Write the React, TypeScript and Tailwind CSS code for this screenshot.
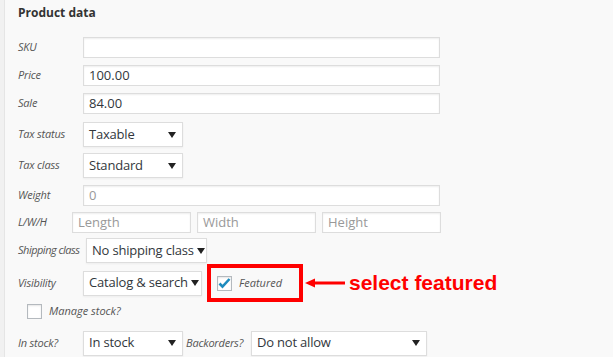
import React from "react";

const font = { fontFamily: '"Open Sans", "Noto Sans", sans-serif' };

function Label({ children, w = "w-[65px]" }: { children: React.ReactNode; w?: string }) {
  return (
    <label className={`${w} shrink-0 whitespace-nowrap text-[11px] italic text-[#555] tracking-[-0.2px]`}>
      {children}
    </label>
  );
}

function TextInput({ value, placeholder, w = "w-[357px]" }: { value?: string; placeholder?: string; w?: string }) {
  return (
    <div
      className={`${w} h-[21px] bg-white border border-[#ddd] shadow-[inset_0_1px_2px_rgba(0,0,0,0.07)] px-[5px] flex items-center text-[13px] ${
        value ? "text-[#32373c]" : "text-[#999]"
      }`}
    >
      {value ?? placeholder}
    </div>
  );
}

function Select({ value, w }: { value: string; w: string }) {
  return (
    <div
      className={`${w} h-[25px] shrink-0 bg-white border border-[#ddd] shadow-[0_1px_2px_rgba(0,0,0,0.05)] pl-[5px] pr-[6px] flex items-center justify-between text-[13px] tracking-[-0.2px] text-[#32373c]`}
    >
      <span className="whitespace-nowrap">{value}</span>
      <svg width="8" height="6" viewBox="0 0 8 6" className="shrink-0 ml-[3px]">
        <path d="M0 0h8L4 6z" fill="#222" />
      </svg>
    </div>
  );
}

function Checkbox({ checked }: { checked?: boolean }) {
  return (
    <div className="w-[15px] h-[15px] bg-white border border-[#b4b9be] shadow-[inset_0_1px_2px_rgba(0,0,0,0.1)] flex items-center justify-center shrink-0">
      {checked && (
        <svg width="13" height="11" viewBox="0 0 13 11">
          <path d="M1.5 5.5l3 3.2L11.5 1" stroke="#1e8cbe" strokeWidth="2.6" fill="none" />
        </svg>
      )}
    </div>
  );
}

export default function App() {
  return (
    <div className="w-[613px] h-[357px] bg-[#f9f9f9] flex overflow-hidden" style={font}>
      <div className="w-[5px] shrink-0 bg-[#f1f1f1] border-r border-[#e5e5e5]" />
      <div className="flex-1 pl-[13px] flex flex-col">
        <h2 className="mt-[5px] text-[12px] font-bold text-[#333] leading-[16px]">Product data</h2>

        <div className="mt-[16px] flex items-center">
          <Label>SKU</Label>
          <TextInput />
        </div>
        <div className="mt-[7px] flex items-center">
          <Label>Price</Label>
          <TextInput value="100.00" />
        </div>
        <div className="mt-[7px] flex items-center">
          <Label>Sale</Label>
          <TextInput value="84.00" />
        </div>
        <div className="mt-[8px] flex items-center">
          <Label>Tax status</Label>
          <Select value="Taxable" w="w-[100px]" />
        </div>
        <div className="mt-[6px] flex items-center">
          <Label>Tax class</Label>
          <Select value="Standard" w="w-[100px]" />
        </div>
        <div className="mt-[7px] flex items-center">
          <Label>Weight</Label>
          <TextInput placeholder="0" />
        </div>
        <div className="mt-[6px] flex items-center gap-[6px]">
          <Label w="w-[48px]">L/W/H</Label>
          <TextInput placeholder="Length" w="w-[119px]" />
          <TextInput placeholder="Width" w="w-[119px]" />
          <TextInput placeholder="Height" w="w-[119px]" />
        </div>
        <div className="mt-[5px] flex items-center">
          <label className="w-[68px] shrink-0 whitespace-nowrap text-[11px] italic text-[#555] tracking-[-0.5px]">
            Shipping class
          </label>
          <Select value="No shipping class" w="w-[121px]" />
        </div>
        <div className="mt-[1px] flex items-center">
          <Label>Visibility</Label>
          <Select value="Catalog & search" w="w-[119px]" />
          <div className="ml-[5px] w-[96px] h-[38px] border-4 border-[#f00] flex items-center pl-[6px] gap-[7px]">
            <Checkbox checked />
            <span className="text-[11px] italic text-[#555]">Featured</span>
          </div>
          <div className="ml-[2px] flex items-center">
            <svg width="40" height="10" viewBox="0 0 40 10">
              <path d="M0 5L10 0.5V9.5z" fill="#f00" />
              <rect x="9" y="3.5" width="31" height="3" fill="#f00" />
            </svg>
          </div>
          <span
            className="ml-[4px] text-[21px] font-bold text-[#f00] whitespace-nowrap"
            style={{ fontFamily: '"Liberation Sans", Arial, sans-serif' }}
          >
            select featured
          </span>
        </div>
        <div className="mt-[1px] ml-[9px] flex items-center gap-[7px]">
          <Checkbox />
          <span className="text-[11px] italic text-[#555]">Manage stock?</span>
        </div>
        <div className="mt-[11px] flex items-center">
          <Label>In stock?</Label>
          <Select value="In stock" w="w-[100px]" />
          <span className="ml-[3px] w-[65px] shrink-0 whitespace-nowrap text-[11px] italic text-[#555] tracking-[-0.2px]">
            Backorders?
          </span>
          <Select value="Do not allow" w="w-[176px]" />
        </div>
      </div>
    </div>
  );
}
